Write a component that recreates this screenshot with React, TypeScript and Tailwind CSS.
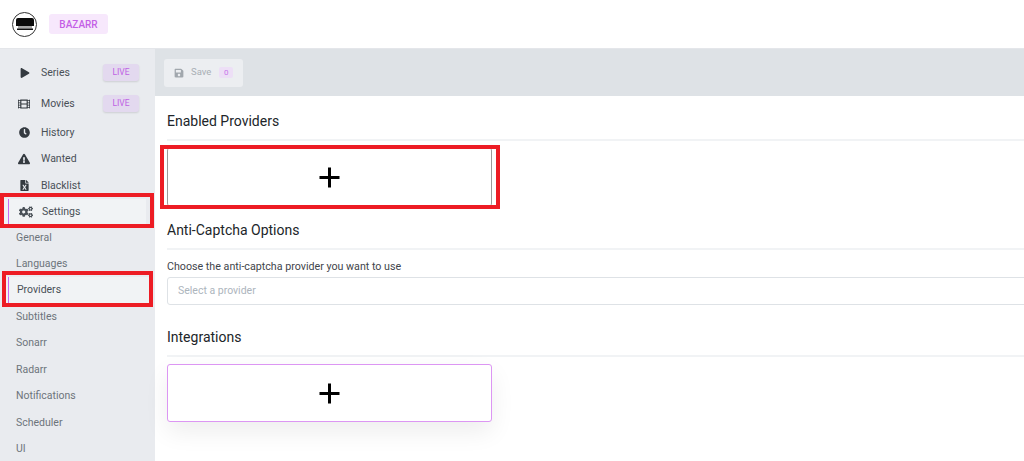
import React from "react";
import {
  FaPlay,
  FaFilm,
  FaClock,
  FaExclamationTriangle,
  FaFileExcel,
  FaCogs,
  FaSave,
} from "react-icons/fa";

const topItems = [
  { label: "Series", icon: FaPlay, size: 10, live: true, h: "h-[31px]", iconClass: "pl-[2px]" },
  { label: "Movies", icon: FaFilm, size: 12, live: true, h: "h-[31px]", iconClass: "" },
  { label: "History", icon: FaClock, size: 11, live: false, h: "h-[27px]", iconClass: "pl-[1px]" },
  { label: "Wanted", icon: FaExclamationTriangle, size: 12, live: false, h: "h-[26px]", iconClass: "" },
  { label: "Blacklist", icon: FaFileExcel, size: 11, live: false, h: "h-[27px]", iconClass: "pl-[1px]" },
];

const subItems = ["General", "Languages", "Providers", "Subtitles", "Sonarr", "Radarr", "Notifications", "Scheduler", "UI"];

const PlusBox = ({ purple }: { purple?: boolean }) => (
  <div
    className={
      purple
        ? "w-[325px] h-[58px] flex items-center justify-center bg-white rounded-[3px] border-[1.5px] border-[#dc96f3] shadow-[0_10px_24px_rgba(0,0,0,0.07)]"
        : "w-[325px] h-[58px] flex items-center justify-center bg-white rounded-[3px] border-x border-x-[#9a9a9a]"
    }
  >
    <svg width="21" height="21" viewBox="0 0 21 21">
      <path d="M10.5 0.5v20M0.5 10.5h20" stroke="#000" strokeWidth="3" fill="none" />
    </svg>
  </div>
);

const SectionTitle = ({ children }: { children: React.ReactNode }) => (
  <div className="h-[37px] border-b-2 border-[#f1f3f5] flex items-center text-[14px] text-[#212529]">
    {children}
  </div>
);

export default function App() {
  return (
    <div className="relative w-[1024px] h-[461px] overflow-hidden bg-white font-['Roboto',sans-serif]">
      {/* Header */}
      <div className="h-[49px] flex items-center pl-[12px] border-b border-[#e4e6ea]">
        <div className="w-[25px] h-[25px] rounded-full border border-[#333] bg-white flex items-center justify-center">
          <svg width="18" height="12" viewBox="0 0 18 12">
            <path d="M0 2a2 2 0 0 1 2-2h14a2 2 0 0 1 2 2v6H0z" fill="#0b0b0b" />
            <rect x="2" y="8" width="14" height="2.5" fill="#a8a8a8" />
            <rect x="1" y="10.5" width="16" height="1.5" fill="#111" />
          </svg>
        </div>
        <div className="ml-[12px] w-[59px] h-[20px] rounded-[3px] bg-[#f7e8fc] text-[#c45fe6] text-[10px] font-medium flex items-center justify-center">
          BAZARR
        </div>
      </div>

      <div className="flex h-[412px]">
        {/* Sidebar */}
        <div className="w-[155px] shrink-0 bg-[#e9ebef] pt-[8px] text-[10.5px] text-[#495057]">
          {topItems.map((item) => (
            <div key={item.label} className={`${item.h} flex items-center pl-[18px] pr-[16px]`}>
              <span className={`w-[23px] shrink-0 flex justify-start text-[#343a40] ${item.iconClass}`}>
                <item.icon size={item.size} />
              </span>
              <span className="flex-1">{item.label}</span>
              {item.live && (
                <span className="w-[36px] h-[17px] rounded-[3px] bg-[#e3d9ef] text-[#bf62e4] text-[8.5px] flex items-center justify-center shadow-[0_1px_2px_rgba(0,0,0,0.12)]">
                  LIVE
                </span>
              )}
            </div>
          ))}
          <div className="h-[25px] ml-[3px] mr-[9px] pl-[5px] bg-[#f1f3f5]">
            <div className="h-full flex items-center border-l border-[#c96cf0] pl-[10px]">
              <span className="w-[15px] shrink-0 mr-[8px] text-[#495057]">
                <FaCogs size={14} />
              </span>
              Settings
            </div>
          </div>
          {subItems.map((s) =>
            s === "Providers" ? (
              <div key={s} className="h-[26.4px] ml-[3px] mr-[6px] pl-[5px] bg-[#f1f3f5]">
                <div className="h-full flex items-center border-l border-[#c96cf0] pl-[8px]">{s}</div>
              </div>
            ) : (
              <div key={s} className="h-[26.4px] flex items-center pl-[16px] pt-[1px] text-[#6d747b]">
                {s}
              </div>
            )
          )}
        </div>

        {/* Main */}
        <div className="flex-1 min-w-0">
          <div className="h-[47px] bg-[#dee2e6] flex items-center pl-[9px]">
            <div className="w-[79px] h-[28px] rounded-[3px] bg-[#eceef1] flex items-center pl-[10px] text-[9.5px] text-[#a9afb5]">
              <FaSave size={10} className="text-[#a1a7ad]" />
              <span className="ml-[7px]">Save</span>
              <span className="ml-[8px] w-[14px] h-[11px] rounded-[2px] bg-[#eddff6] text-[#c777ea] text-[8px] flex items-center justify-center">
                0
              </span>
            </div>
          </div>

          <div className="pl-[12px] pt-[8px]">
            <SectionTitle>Enabled Providers</SectionTitle>
            <div className="mt-[7px]">
              <PlusBox />
            </div>

            <div className="mt-[7px]">
              <SectionTitle>Anti-Captcha Options</SectionTitle>
            </div>
            <div className="mt-[10px] text-[10.7px] leading-[14px] text-[#3f454b]">
              Choose the anti-captcha provider you want to use
            </div>
            <div className="mt-[3px] -mr-[8px] h-[28px] border border-[#dee2e6] rounded-[3px] flex items-center pl-[10px] text-[10.5px] text-[#adb5bd]">
              Select a provider
            </div>

            <div className="mt-[15px]">
              <SectionTitle>Integrations</SectionTitle>
            </div>
            <div className="mt-[7px]">
              <PlusBox purple />
            </div>
          </div>
        </div>
      </div>

      {/* Red annotation boxes */}
      <div className="absolute left-0 top-[193px] w-[154px] h-[35px] border-[4px] border-[#ed1c24]" />
      <div className="absolute left-[2px] top-[271px] w-[151px] h-[36px] border-[4px] border-[#ed1c24]" />
      <div className="absolute left-[160px] top-[145px] w-[340px] h-[64px] border-[4px] border-[#ed1c24]" />
    </div>
  );
}
